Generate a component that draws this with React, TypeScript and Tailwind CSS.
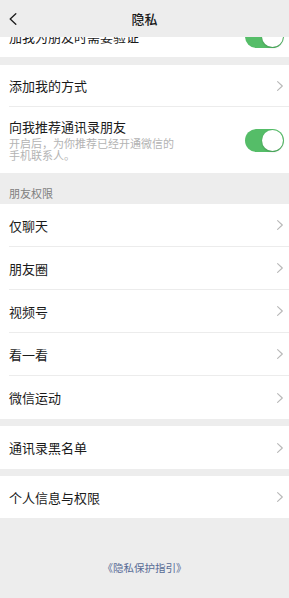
import type { ReactNode } from "react";

const FONT = { fontFamily: '"Noto Sans CJK SC", "Noto Sans", sans-serif' };

function Chevron() {
  return (
    <svg width="6" height="10" viewBox="0 0 6 10" fill="none">
      <polyline points="0.6,0.6 5.3,5 0.6,9.4" stroke="#b8b8b8" strokeWidth="1.1" strokeLinecap="round" strokeLinejoin="round" />
    </svg>
  );
}

function Toggle() {
  return (
    <div className="flex h-[23px] w-[39px] items-center justify-end rounded-full bg-[#55bd68] p-[1px]">
      <div className="h-[21px] w-[21px] rounded-full bg-white shadow-[0_1px_2px_rgba(0,0,0,0.2)]" />
    </div>
  );
}

function Row({ label, last = false, h = "h-[43px]", right }: { label: string; last?: boolean; h?: string; right?: ReactNode }) {
  return (
    <div className="bg-white pl-[9px]">
      <div className={`flex ${h} items-center justify-between pr-[6px] ${last ? "" : "border-b border-[#ececec]"}`}>
        <span className="text-[13px] leading-none text-[#1a1a1a]">{label}</span>
        {right ?? <Chevron />}
      </div>
    </div>
  );
}

const FRIEND_PERMS = ["仅聊天", "朋友圈", "视频号", "看一看", "微信运动"];

export default function App() {
  return (
    <div className="flex h-[598px] w-full flex-col overflow-hidden bg-[#ededed]" style={FONT}>
      {/* nav bar */}
      <div className="grid h-[37px] grid-cols-[40px_1fr_40px] items-center bg-[#ededed]">
        <div className="pl-[9px]">
          <svg width="8" height="12" viewBox="0 0 8 12" fill="none">
            <polyline points="6.8,0.8 1.2,6 6.8,11.2" stroke="#1a1a1a" strokeWidth="1.3" strokeLinecap="round" strokeLinejoin="round" />
          </svg>
        </div>
        <div className="text-center text-[13px] font-medium text-[#1a1a1a]">隐私</div>
        <div />
      </div>

      {/* row scrolled under the nav bar */}
      <div className="h-[20px] overflow-hidden bg-white">
        <div className="-mt-[22px] flex h-[42px] items-center justify-between pr-[5px] pl-[9px]">
          <span className="text-[13px] leading-none text-[#1a1a1a]">加我为朋友时需要验证</span>
          <Toggle />
        </div>
      </div>

      <div className="h-[8px]" />

      <Row label="添加我的方式" h="h-[42px]" />
      <div className="bg-white pl-[9px]">
        <div className="flex h-[66px] items-center justify-between pr-[5px]">
          <div className="flex flex-col">
            <span className="text-[13px] leading-[14px] text-[#1a1a1a]">向我推荐通讯录朋友</span>
            <span className="mt-[3px] w-[172px] text-[11px] leading-[12px] text-[#b3b3b3]">
              开启后，为你推荐已经开通微信的手机联系人。
            </span>
          </div>
          <Toggle />
        </div>
      </div>

      <div className="flex h-[31px] items-end pb-[4px] pl-[9px]">
        <span className="text-[11px] leading-[14px] text-[#7f7f7f]">朋友权限</span>
      </div>

      {FRIEND_PERMS.map((label, i) => (
        <Row key={label} label={label} last={i === FRIEND_PERMS.length - 1} />
      ))}

      <div className="h-[7px]" />
      <Row label="通讯录黑名单" last />
      <div className="h-[7px]" />
      <Row label="个人信息与权限" h="h-[42px]" last />

      <div className="pt-[43px] text-center text-[10.5px] leading-[14px] text-[#576b95]">《隐私保护指引》</div>
    </div>
  );
}
